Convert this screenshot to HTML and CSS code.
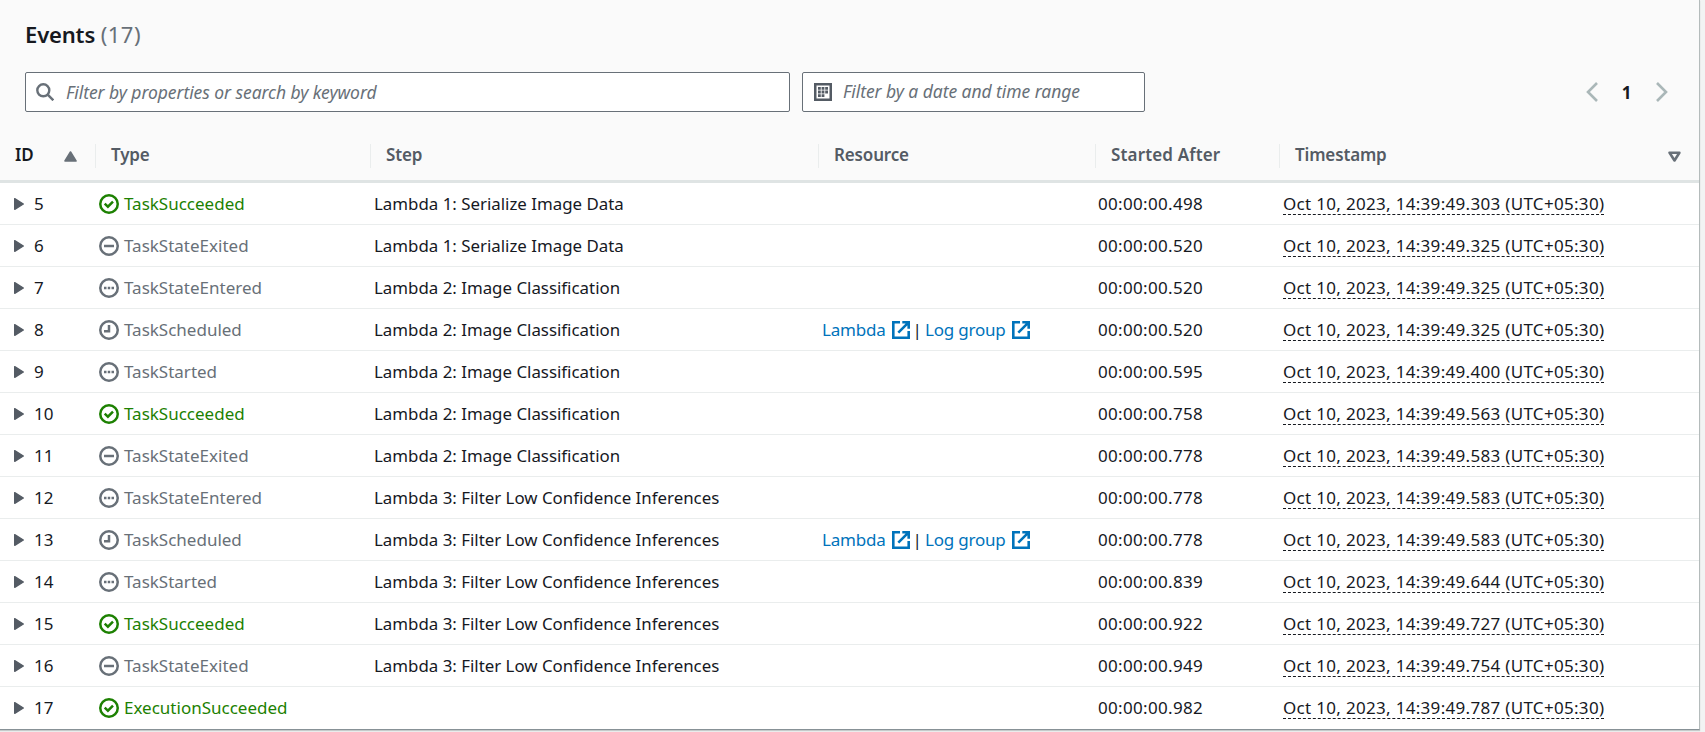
FILE: index.html
```
<!DOCTYPE html>
<html lang="en">
<head>
<meta charset="utf-8">
<title>Events</title>
<link rel="stylesheet" href="styles.css">
</head>
<body>
<svg class="sprite" aria-hidden="true">
  <symbol id="ok" viewBox="0 0 20 20"><circle cx="10" cy="10" r="8.75"/><path d="M5.7 9.7l3.2 3 5.1-5.1"/></symbol>
  <symbol id="exit" viewBox="0 0 20 20"><circle cx="10" cy="10" r="8.75"/><path d="M5 10h10"/></symbol>
  <symbol id="dots" viewBox="0 0 20 20"><circle cx="10" cy="10" r="8.75"/><path d="M5 10h2.5M8.75 10h2.5M12.5 10H15"/></symbol>
  <symbol id="clock" viewBox="0 0 20 20"><circle cx="10" cy="10" r="8.75"/><path d="M10 5v6.2H5"/></symbol>
  <symbol id="ext" viewBox="0 0 18 18"><path d="M8 1.3H1.3v15.4h15.4V10M10.3 1.3h6.4v6.4M16.3 1.7L6.3 11.7"/></symbol>
  <symbol id="caret" viewBox="0 0 10 12"><path d="M.7.7v10.6L9.3 6z"/></symbol>
</svg>
<main class="panel">
  <header class="top">
    <h1 class="title">Events <span class="count">(17)</span></h1>
    <div class="tools">
      <div class="field search">
        <svg class="search-icon" viewBox="0 0 18 18"><circle cx="7.3" cy="7.3" r="6"/><path d="M11.7 11.7l5.6 5.6"/></svg>
        <span class="ph ph-search">Filter by properties or search by keyword</span>
      </div>
      <div class="field date">
        <svg class="cal-icon" viewBox="0 0 18 18"><path class="frame" d="M1.25 1.25h15.5v15.5H1.25z"/><path class="cells" d="M4 5.4h2.8M7.6 5.4h2.8M11.2 5.4H14M4 9h2.8M7.6 9h2.8M11.2 9H14M4 12.6h2.8M7.6 12.6h2.8"/></svg>
        <span class="ph ph-date">Filter by a date and time range</span>
      </div>
      <nav class="pager">
        <svg class="chev" viewBox="0 0 12 20"><path d="M11 1L2 10l9 9"/></svg>
        <b class="page">1</b>
        <svg class="chev" viewBox="0 0 12 20"><path d="M1 1l9 9-9 9"/></svg>
      </nav>
    </div>
  </header>
  <table class="events">
    <colgroup><col class="c-id"><col class="c-type"><col class="c-step"><col class="c-res"><col class="c-start"><col class="c-time"></colgroup>
    <thead>
      <tr>
        <th><div class="h h-id"><span>ID</span><svg class="sort" viewBox="0 0 13 11"><path class="solid" d="M6.5 1L12 10H1z"/></svg></div></th>
        <th><div class="h"><span>Type</span></div></th>
        <th><div class="h"><span>Step</span></div></th>
        <th><div class="h"><span>Resource</span></div></th>
        <th><div class="h"><span class="h-start">Started After</span></div></th>
        <th><div class="h h-last"><span>Timestamp</span><svg class="sort" viewBox="0 0 13 11"><path d="M1.6 1.7h9.8L6.5 9.5z"/></svg></div></th>
      </tr>
    </thead>
    <tbody>
      <tr><td><div class="id"><svg class="caret"><use href="#caret"/></svg>5</div></td><td><div class="type ok"><svg class="ico"><use href="#ok"/></svg><span>TaskSucceeded</span></div></td><td class="step">Lambda 1: Serialize Image Data</td><td></td><td class="start">00:00:00.498</td><td><span class="time">Oct 10, 2023, 14:39:49.303 (UTC+05:30)</span></td></tr>
      <tr><td><div class="id"><svg class="caret"><use href="#caret"/></svg>6</div></td><td><div class="type"><svg class="ico"><use href="#exit"/></svg><span>TaskStateExited</span></div></td><td class="step">Lambda 1: Serialize Image Data</td><td></td><td class="start">00:00:00.520</td><td><span class="time">Oct 10, 2023, 14:39:49.325 (UTC+05:30)</span></td></tr>
      <tr><td><div class="id"><svg class="caret"><use href="#caret"/></svg>7</div></td><td><div class="type"><svg class="ico"><use href="#dots"/></svg><span>TaskStateEntered</span></div></td><td class="step">Lambda 2: Image Classification</td><td></td><td class="start">00:00:00.520</td><td><span class="time">Oct 10, 2023, 14:39:49.325 (UTC+05:30)</span></td></tr>
      <tr><td><div class="id"><svg class="caret"><use href="#caret"/></svg>8</div></td><td><div class="type"><svg class="ico"><use href="#clock"/></svg><span>TaskScheduled</span></div></td><td class="step">Lambda 2: Image Classification</td><td><div class="res"><a class="link">Lambda</a><svg class="ext"><use href="#ext"/></svg><span class="bar">|</span><a class="link">Log group</a><svg class="ext"><use href="#ext"/></svg></div></td><td class="start">00:00:00.520</td><td><span class="time">Oct 10, 2023, 14:39:49.325 (UTC+05:30)</span></td></tr>
      <tr><td><div class="id"><svg class="caret"><use href="#caret"/></svg>9</div></td><td><div class="type"><svg class="ico"><use href="#dots"/></svg><span>TaskStarted</span></div></td><td class="step">Lambda 2: Image Classification</td><td></td><td class="start">00:00:00.595</td><td><span class="time">Oct 10, 2023, 14:39:49.400 (UTC+05:30)</span></td></tr>
      <tr><td><div class="id"><svg class="caret"><use href="#caret"/></svg>10</div></td><td><div class="type ok"><svg class="ico"><use href="#ok"/></svg><span>TaskSucceeded</span></div></td><td class="step">Lambda 2: Image Classification</td><td></td><td class="start">00:00:00.758</td><td><span class="time">Oct 10, 2023, 14:39:49.563 (UTC+05:30)</span></td></tr>
      <tr><td><div class="id"><svg class="caret"><use href="#caret"/></svg>11</div></td><td><div class="type"><svg class="ico"><use href="#exit"/></svg><span>TaskStateExited</span></div></td><td class="step">Lambda 2: Image Classification</td><td></td><td class="start">00:00:00.778</td><td><span class="time">Oct 10, 2023, 14:39:49.583 (UTC+05:30)</span></td></tr>
      <tr><td><div class="id"><svg class="caret"><use href="#caret"/></svg>12</div></td><td><div class="type"><svg class="ico"><use href="#dots"/></svg><span>TaskStateEntered</span></div></td><td class="step">Lambda 3: Filter Low Confidence Inferences</td><td></td><td class="start">00:00:00.778</td><td><span class="time">Oct 10, 2023, 14:39:49.583 (UTC+05:30)</span></td></tr>
      <tr><td><div class="id"><svg class="caret"><use href="#caret"/></svg>13</div></td><td><div class="type"><svg class="ico"><use href="#clock"/></svg><span>TaskScheduled</span></div></td><td class="step">Lambda 3: Filter Low Confidence Inferences</td><td><div class="res"><a class="link">Lambda</a><svg class="ext"><use href="#ext"/></svg><span class="bar">|</span><a class="link">Log group</a><svg class="ext"><use href="#ext"/></svg></div></td><td class="start">00:00:00.778</td><td><span class="time">Oct 10, 2023, 14:39:49.583 (UTC+05:30)</span></td></tr>
      <tr><td><div class="id"><svg class="caret"><use href="#caret"/></svg>14</div></td><td><div class="type"><svg class="ico"><use href="#dots"/></svg><span>TaskStarted</span></div></td><td class="step">Lambda 3: Filter Low Confidence Inferences</td><td></td><td class="start">00:00:00.839</td><td><span class="time">Oct 10, 2023, 14:39:49.644 (UTC+05:30)</span></td></tr>
      <tr><td><div class="id"><svg class="caret"><use href="#caret"/></svg>15</div></td><td><div class="type ok"><svg class="ico"><use href="#ok"/></svg><span>TaskSucceeded</span></div></td><td class="step">Lambda 3: Filter Low Confidence Inferences</td><td></td><td class="start">00:00:00.922</td><td><span class="time">Oct 10, 2023, 14:39:49.727 (UTC+05:30)</span></td></tr>
      <tr><td><div class="id"><svg class="caret"><use href="#caret"/></svg>16</div></td><td><div class="type"><svg class="ico"><use href="#exit"/></svg><span>TaskStateExited</span></div></td><td class="step">Lambda 3: Filter Low Confidence Inferences</td><td></td><td class="start">00:00:00.949</td><td><span class="time">Oct 10, 2023, 14:39:49.754 (UTC+05:30)</span></td></tr>
      <tr><td><div class="id"><svg class="caret"><use href="#caret"/></svg>17</div></td><td><div class="type ok"><svg class="ico"><use href="#ok"/></svg><span>ExecutionSucceeded</span></div></td><td class="step"></td><td></td><td class="start">00:00:00.982</td><td><span class="time">Oct 10, 2023, 14:39:49.787 (UTC+05:30)</span></td></tr>
    </tbody>
  </table>
</main>
</body>
</html>
```

FILE: styles.css
```
* { box-sizing: border-box; }
body { margin: 0; height: 732px; overflow: hidden; background: #f2f3f3; font-family: "Noto Sans", "Open Sans", sans-serif; font-size: 17px; color: #16191f; }
svg { display: block; flex: none; fill: none; stroke: currentColor; }
.sprite { display: none; }
.panel { width: 1700px; height: 730px; background: #fff; border-right: 1px solid #b4bbbb; border-bottom: 1px solid #879196; box-shadow: 0 1px 1px #c5caca; }
.top { height: 128px; padding: 18px 24px 0 25px; background: #fafafa; }
.title { margin: 0; height: 54px; font-size: 22px; line-height: 32px; font-weight: 600; letter-spacing: -.15px; }
.count { font-weight: 400; color: #687078; letter-spacing: .5px; }
.tools { display: flex; height: 40px; }
.field { display: flex; align-items: center; height: 40px; background: #fff; border: 1px solid #687078; border-radius: 2px; color: #687078; }
.search { width: 765px; padding-left: 10px; gap: 12px; }
.date { width: 343px; margin-left: 12px; padding-left: 11px; gap: 11px; color: #545b64; }
.ph { font-style: italic; font-size: 17.5px; white-space: nowrap; line-height: 24px; color: #687078; padding-bottom: 1px; letter-spacing: -.06px; }
.ph-date { padding-bottom: 2px; }
.search-icon { width: 18px; height: 18px; stroke-width: 2.4; }
.cal-icon { width: 18px; height: 18px; }
.frame { stroke-width: 2.5; }
.cells { stroke-width: 2.8; }
.pager { display: flex; align-items: center; margin-left: auto; padding-right: 7px; }
.chev { width: 12px; height: 20px; color: #aab7b8; stroke-width: 2.6; }
.page { width: 58px; padding-right: 1px; text-align: center; font-weight: 700; }
.events { width: 1699px; table-layout: fixed; border-collapse: separate; border-spacing: 0; }
.c-id { width: 96px; } .c-type { width: 275px; } .c-step { width: 448px; } .c-res { width: 277px; } .c-start { width: 184px; } .c-time { width: 419px; }
th { height: 55px; padding: 0; background: #fafafa; border-bottom: 3px solid #dfe4e4; vertical-align: top; text-align: left; color: #545b64; font-weight: 600; }
.h { display: flex; align-items: center; height: 24px; margin-top: 16px; padding: 0 18px 2px 15px; border-right: 1px solid #eaeded; justify-content: space-between; line-height: 22px; letter-spacing: -.15px; }
.h-id { color: #16191f; padding-right: 18px; }
.h-start { letter-spacing: .15px; }
.h-last { border-right: 0; }
.sort { width: 13px; height: 11px; margin-top: 3px; color: #687078; stroke-width: 2.6; stroke-linejoin: round; }
.solid { fill: currentColor; stroke-width: 1.6; }
td { height: 42px; padding: 0 0 0 3px; border-bottom: 1px solid #eaeded; line-height: 22px; white-space: nowrap; }
tbody tr:last-child td { border-bottom: 0; }
.id { display: flex; align-items: center; padding-left: 11px; gap: 10px; }
.caret { width: 10px; height: 12px; color: #545b64; fill: currentColor; stroke-linejoin: round; stroke-width: 1.4; }
.type { display: flex; align-items: center; gap: 5px; color: #687078; }
.ok { color: #1d8102; }
.ico { width: 20px; height: 20px; stroke-width: 2.5; }
.step { font-size: 16.88px; }
.start { letter-spacing: .33px; padding-left: 2px; }
.res { display: flex; align-items: center; }
.link { color: #0073bb; letter-spacing: -.2px; }
.ext { width: 18px; height: 18px; margin-left: 6px; color: #0073bb; stroke-width: 2.6; }
.bar { padding: 0 3px; }
.time { display: inline-block; line-height: 21px; letter-spacing: .31px; border-bottom: 1px dashed #16191f; }
```
